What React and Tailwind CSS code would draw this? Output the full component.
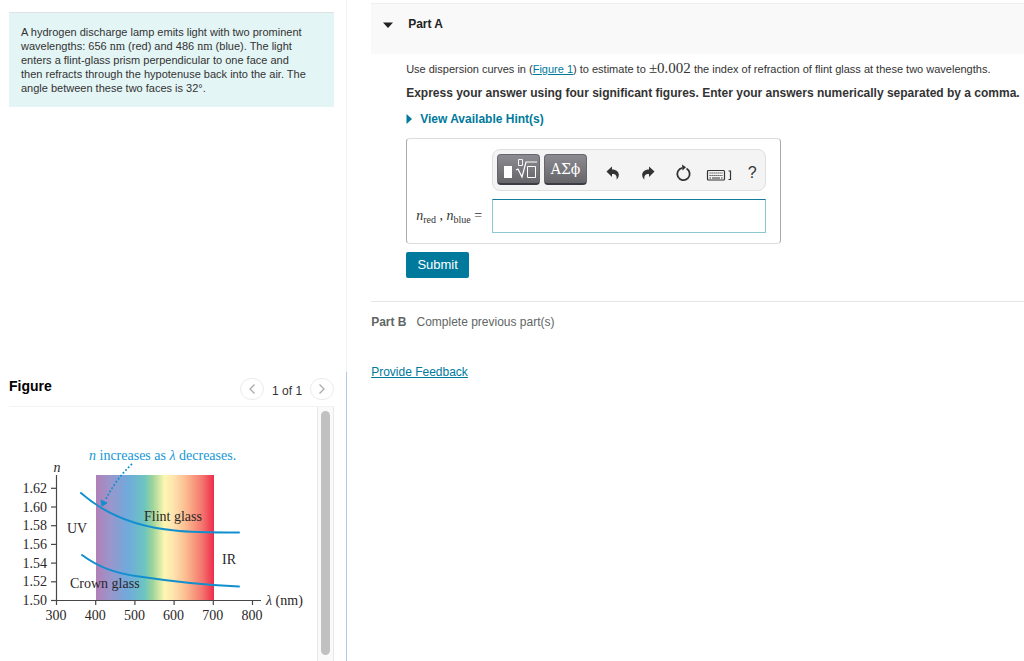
import { useState } from "react";

const yTicks = ["1.50", "1.52", "1.54", "1.56", "1.58", "1.60", "1.62"];
const xTicks = [300, 400, 500, 600, 700, 800];

function DispersionChart() {
  const x = (nm) => 47 + (nm - 300) * 0.392;
  const y = (i) => 193 - i * 18.7;

  return (
    <svg
      viewBox="0 0 308 254"
      role="img"
      aria-label="Index of refraction versus wavelength"
      className="w-[308px] h-[254px] shrink-0 font-['Liberation_Serif',serif]"
      fontSize="14"
      fill="#2b2728"
    >
      <defs>
        <linearGradient id="spectrum">
          <stop offset="0" stopColor="#b27fb8" />
          <stop offset="0.12" stopColor="#9a96cb" />
          <stop offset="0.27" stopColor="#70aadd" />
          <stop offset="0.41" stopColor="#6cc5c0" />
          <stop offset="0.48" stopColor="#9dd49a" />
          <stop offset="0.58" stopColor="#fdf6b0" />
          <stop offset="0.65" stopColor="#fde6b0" />
          <stop offset="0.76" stopColor="#fcbc90" />
          <stop offset="0.9" stopColor="#f4766e" />
          <stop offset="1" stopColor="#ee2c4c" />
        </linearGradient>
      </defs>

      <rect x="87" y="68" width="118" height="125" fill="url(#spectrum)" />

      {/* Axes */}
      <path d="M47.500 68V193.500H252" fill="none" stroke="#4a4648" strokeWidth="1.2" />
      {yTicks.map((t, i) => (
        <g key={t}>
          <path d={`M42 ${y(i) + 0.5}H47`} stroke="#4a4648" strokeWidth="1.2" />
          <text x="38" y={y(i) + 5} textAnchor="end">{t}</text>
        </g>
      ))}
      {xTicks.map((t) => (
        <g key={t}>
          <path d={`M${x(t) + 0.5} 193V198`} stroke="#4a4648" strokeWidth="1.2" />
          <text x={x(t)} y="213" textAnchor="middle">{t}</text>
        </g>
      ))}
      <text x="48" y="65" textAnchor="middle" fontStyle="italic">n</text>
      <text x="257" y="198"><tspan fontStyle="italic">λ</tspan> (nm)</text>

      {/* Curves */}
      <g fill="none" stroke="#128fcf" strokeWidth="2" strokeLinecap="round">
        <path d="M72 86C97 108 127 120 166 123.500C182 125.500 200 125.500 230 125.500" />
        <path d="M73 148C88 159 104 166 130 169.500C160 174 190 178 230 179.500" />
      </g>

      <text x="135" y="114">Flint glass</text>
      <text x="61" y="181">Crown glass</text>
      <text x="58" y="126">UV</text>
      <text x="213" y="157">IR</text>

      {/* Callout */}
      <text x="80" y="53" fill="#1598d5">
        <tspan fontStyle="italic">n</tspan> increases as <tspan fontStyle="italic">λ</tspan> decreases.
      </text>
      <path d="M123 57C112 67 103 80 97 92" fill="none" stroke="#128fcf" strokeWidth="1.8" strokeDasharray="1.8 2" />
      <path d="M92 93L98 96L93 99Z" fill="#128fcf" stroke="#128fcf" strokeLinejoin="round" />
    </svg>
  );
}

function ToolButton({ label, children }) {
  return (
    <button type="button" aria-label={label} className="min-w-6 h-6 flex items-center justify-center text-[#333]">
      {children}
    </button>
  );
}

const padButton =
  "w-[43px] h-[31px] rounded border border-[#66666c] border-b-2 border-b-[#3c3c44] bg-linear-to-b from-[#8b8b91] to-[#66666a] text-white flex items-center justify-center";

function EquationToolbar() {
  return (
    <div className="h-[42px] flex items-start rounded-lg border border-[#dfdfdf] bg-[#f4f4f4] pl-1 pt-1">
      <div className="flex gap-1">
        <button type="button" aria-label="Templates" className={padButton}>
          <svg viewBox="0 0 36 24" className="w-9 h-6" fill="none" stroke="#fff">
            <path d="M3 9h8v12H3z" fill="#fff" stroke="none" />
            <path d="M17.500 2.500h4v6h-4z" strokeWidth=".9" />
            <path d="M15 13l2-1 4 8 4-15h11" strokeWidth="1.200" />
            <path d="M26.500 9.500h8v11h-8z" />
          </svg>
        </button>
        <button type="button" aria-label="Symbols" className={padButton + " font-['DejaVu_Serif',serif] text-sm"}>
          ΑΣϕ
        </button>
      </div>
      <div className="flex gap-[11px] pl-[14px] pt-[7px]">
        <ToolButton label="Undo">
          <svg viewBox="0 0 14 14" className="w-3.5 h-3.5" fill="currentColor">
            <path d="M0.500 5.500L6 0.500V3.500C10.500 3.500 13 6 12.800 9C12.700 11 11.800 12.500 10.500 13.500C11.200 10 10 8 6 8V11Z" />
          </svg>
        </ToolButton>
        <ToolButton label="Redo">
          <svg viewBox="0 0 14 14" className="w-3.5 h-3.5" fill="currentColor">
            <path d="M13.500 5.500L8 0.500V3.500C3.500 3.500 1 6 1.200 9C1.300 11 2.200 12.500 3.500 13.500C2.800 10 4 8 8 8V11Z" />
          </svg>
        </ToolButton>
        <ToolButton label="Reset">
          <svg viewBox="0 0 16 18" className="w-4 h-[18px]" fill="none" stroke="currentColor" strokeWidth="1.800">
            <path d="M11.500 4.500A6.200 6.200 0 1 1 7.500 3.800" />
            <path d="M7 .5L11 3.300L7.500 6.500Z" fill="currentColor" stroke="none" />
          </svg>
        </ToolButton>
        <div className="flex gap-2">
          <ToolButton label="Keyboard shortcuts">
            <svg viewBox="0 0 26 14" className="w-[26px] h-3.5 mt-1" fill="none" stroke="currentColor">
              <rect x="1.500" y="2.500" width="17" height="9.500" rx="1" strokeWidth="1.200" />
              <path d="M3.500 5h13M3.500 7.500h13" strokeDasharray="1.200 .8" strokeWidth="1.200" />
              <path d="M3.500 10h1.500M6 10h8M15 10h1.500" />
              <path d="M22.500 3h2v8.500h-2" strokeWidth="1.200" />
            </svg>
          </ToolButton>
          <ToolButton label="Help">
            <span className="text-base">?</span>
          </ToolButton>
        </div>
      </div>
    </div>
  );
}

function PageButton({ label, path }) {
  return (
    <button
      type="button"
      aria-label={label}
      className="w-6 h-[22px] rounded-full border border-[#ececec] flex items-center justify-center"
    >
      <svg viewBox="0 0 10 12" className="w-2.5 h-3" fill="none" stroke="#aaa" strokeWidth="1.300">
        <path d={path} />
      </svg>
    </button>
  );
}

export default function App() {
  const [answer, setAnswer] = useState("");

  return (
    <div className="min-h-screen flex bg-white font-['Liberation_Sans',Arial,sans-serif] text-[#333]">
      {/* Problem and figure */}
      <aside className="w-[33.9%] shrink-0 flex flex-col">
        <div className="flex-1 border-r border-[#f3f3f3] pl-[9px] pr-3 pt-3">
          <p className="border-t border-[#dde2e2] bg-[#e3f5f5] pl-3 pr-7 py-3 text-[11px] leading-[14px]">
            A hydrogen discharge lamp emits light with two prominent wavelengths: 656{" "}
            <span className="font-['Liberation_Serif',serif] text-xs leading-[14px]">nm</span> (red) and 486{" "}
            <span className="font-['Liberation_Serif',serif] text-xs leading-[14px]">nm</span> (blue). The light enters a
            flint-glass prism perpendicular to one face and then refracts through the hypotenuse back into the air. The
            angle between these two faces is 32°.
          </p>
        </div>

        <section className="border-r border-[#b3c8e0] pl-[9px] pr-3">
          <div className="h-[35px] flex items-center justify-between border-b border-[#f3f3f3]">
            <h2 className="text-sm font-bold text-black pb-1.5">Figure</h2>
            <div className="flex items-center gap-2 text-xs">
              <PageButton label="Previous figure" path="M7.500 1.500L3 6L7.500 10.500" />
              <span className="pt-1">1 of 1</span>
              <PageButton label="Next figure" path="M2.500 1.500L7 6L2.500 10.500" />
            </div>
          </div>
          <div className="flex justify-between">
            <DispersionChart />
            <div className="w-[17px] border-x border-[#e8e8e8] bg-[#fafafa] pt-1 pb-1.5 flex justify-center">
              <div className="w-[9px] rounded-full bg-[#c1c1c1]" />
            </div>
          </div>
        </section>
      </aside>

      {/* Question parts */}
      <main className="flex-1 min-w-0 pl-6 pt-[3px]">
        <header className="h-[51px] flex items-start gap-[15px] border-t border-[#efefef] bg-[#f9f9f9] pl-3 pt-3">
          <svg viewBox="0 0 10 6" className="w-2.5 h-1.5 mt-1.5" fill="#222">
            <path d="M0 .5H10L5 6Z" />
          </svg>
          <h1 className="text-xs leading-4 font-bold text-[#222]">Part A</h1>
        </header>

        <div className="pl-[35px] pt-1.5 text-xs">
          <p className="text-[11px] leading-4 whitespace-nowrap">
            Use dispersion curves in (
            <a href="#figure" className="text-[#007a9c] underline">Figure 1</a>) to estimate to{" "}
            <span className="font-['Liberation_Serif',serif] text-[15px] leading-4">±0.002</span> the index of refraction
            of flint glass at these two wavelengths.
          </p>
          <p className="mt-2 leading-4 font-bold whitespace-nowrap">
            Express your answer using four significant figures. Enter your answers numerically separated by a comma.
          </p>
          <button type="button" className="mt-2.5 h-4 flex items-center gap-2 font-bold text-[#007a9c]">
            <svg viewBox="0 0 6 10" className="w-1.5 h-2.5" fill="currentColor">
              <path d="M0.500 0L6 5L0.500 10Z" />
            </svg>
            View Available Hint(s)
          </button>

          <form onSubmit={(e) => e.preventDefault()}>
            <div className="mt-[11px] w-[375px] rounded border border-[#ddd] border-x-[#aaa] pt-2.5 pb-2.5 pl-[9px] pr-[14px] grid grid-cols-[76px_1fr] gap-y-2">
              <div className="col-start-2">
                <EquationToolbar />
              </div>
              <label
                htmlFor="answer"
                className="self-center whitespace-nowrap font-['Liberation_Serif',serif] text-sm leading-4"
              >
                <i>n</i>
                <sub className="text-[10px]">red</sub> , <i>n</i>
                <sub className="text-[10px]">blue</sub> =
              </label>
              <input
                id="answer"
                value={answer}
                onChange={(e) => setAnswer(e.target.value)}
                autoComplete="off"
                className="h-[34px] min-w-0 border border-[#8cc8d4] border-t-[#137d9b] px-2 text-sm outline-none"
              />
            </div>
            <button type="submit" className="mt-2 w-[63px] h-[26px] rounded-xs bg-[#007a9c] text-[13px] text-white">
              Submit
            </button>
          </form>
        </div>

        <div className="mt-[23px] border-t border-[#e6e6e6] pt-3 text-xs leading-4 text-[#5f6664]">
          <strong>Part B</strong>
          <span className="ml-2.5">Complete previous part(s)</span>
        </div>
        <a href="#feedback" className="mt-[34px] inline-block text-xs leading-4 text-[#007a9c] underline">
          Provide Feedback
        </a>
      </main>
    </div>
  );
}
